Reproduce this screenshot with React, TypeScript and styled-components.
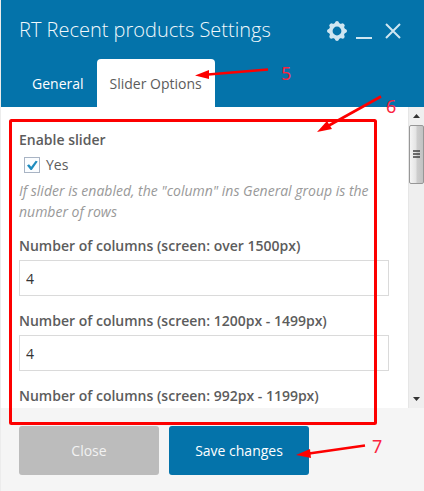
import React, { useId } from "react";
import styled, { createGlobalStyle } from "styled-components";

const blue = "#0473aa";
const red = "#fd0000";

const GlobalStyle = createGlobalStyle`
  * { box-sizing: border-box; }
  body {
    margin: 0;
    background: #ececec;
    font-family: "Open Sans", "Noto Sans", sans-serif;
    font-size: 14px;
    line-height: 20px;
    color: #5c5c5c;
  }
`;

const Panel = styled.main`
  position: relative;
  display: flex;
  flex-direction: column;
  height: 100vh;
  margin-left: 1px;
  background: #fff;
  overflow: hidden;
`;

const Header = styled.header`
  flex: none;
  background: ${blue};
  color: #fff;
`;

const TitleBar = styled.div`
  display: flex;
  align-items: center;
  justify-content: space-between;
  height: 59px;
  padding: 1px 21px 0 18px;
`;

const Title = styled.h1`
  margin: 0;
  font-size: 20px;
  line-height: 28px;
  font-weight: 300;
  color: #f2f9fc;
  white-space: nowrap;
`;

const WindowControls = styled.div`
  display: flex;
  gap: 8px;
  padding-top: 2px;
`;

const IconButton = styled.button`
  display: block;
  width: 20px;
  height: 20px;
  padding: 0;
  border: 0;
  background: none;
  color: #cfe6f1;

  svg { display: block; }
`;

const Tabs = styled.div`
  display: flex;
  padding-left: 18px;
`;

const Tab = styled.button<{ $active?: boolean }>`
  height: 48px;
  padding: 2px 13px 0;
  border: 0;
  border-radius: 4px 4px 0 0;
  background: ${(p) => (p.$active ? "#fff" : "transparent")};
  color: ${(p) => (p.$active ? "#5c5c5c" : "#fff")};
  font: ${(p) => (p.$active ? 400 : 500)} 14px/20px "Open Sans", sans-serif;
`;

const Body = styled.div`
  display: flex;
  flex: 1;
  min-height: 0;
`;

const Fields = styled.form`
  flex: 1;
  min-width: 0;
  padding: 23px 19px 0 18px;
  overflow: hidden;
`;

const Field = styled.div`
  margin-bottom: 15px;
`;

const Label = styled.label`
  display: block;
  margin-bottom: 4px;
  font-weight: 600;
`;

const Group = styled.fieldset`
  margin: 0 0 14px;
  padding: 0;
  border: 0;
`;

const Legend = styled.legend`
  padding: 0;
  font-weight: 600;
`;

const Option = styled.label`
  display: flex;
  align-items: center;
  gap: 6px;
  padding: 5px 0 5px 5px;
`;

const Tick = styled.span`
  position: relative;
  width: 16px;
  height: 16px;

  svg {
    position: absolute;
    inset: 0;
    pointer-events: none;
  }
`;

const Checkbox = styled.input`
  appearance: none;
  display: block;
  width: 16px;
  height: 16px;
  margin: 0;
  border: 1px solid #a9b4c4;
  background: #fbfdff;

  & + svg { display: none; }
  &:checked + svg { display: block; }
`;

const Hint = styled.p`
  margin: 0;
  line-height: 21px;
  font-style: italic;
  color: #999;
`;

const TextInput = styled.input`
  display: block;
  width: 100%;
  height: 36px;
  padding: 0 6px;
  border: 1px solid #dadada;
  background: #fff;
  color: #333;
  font: 400 14px/20px "Open Sans", sans-serif;
`;

const ScrollTrack = styled.div`
  display: flex;
  flex-direction: column;
  flex: none;
  width: 16px;
  background: #efefef;
  border-left: 1px solid #e6e6e6;
`;

const ScrollArrow = styled.button`
  display: grid;
  place-items: center;
  width: 100%;
  height: 18px;
  padding: 0;
  border: 0;
  background: none;
`;

const ScrollThumb = styled.div`
  display: grid;
  place-items: center;
  height: 59px;
  margin-bottom: auto;
  border: 1px solid #979797;
  border-radius: 2px;
  background: linear-gradient(90deg, #f5f5f5, #e4e4e4 45%, #cdcdcd 55%, #c2c2c2);
`;

const Footer = styled.footer`
  display: flex;
  flex: none;
  gap: 10px;
  padding: 18px 18px 16px;
  background: #f5f5f5;
`;

const ActionButton = styled.button<{ $primary?: boolean }>`
  width: 140px;
  height: 49px;
  padding: 0;
  border: 0;
  border-radius: 3px;
  background: ${(p) => (p.$primary ? blue : "#bcbcbc")};
  color: ${(p) => (p.$primary ? "#fff" : "#f2f2f2")};
  font: ${(p) => (p.$primary ? 500 : 400)} 14px/20px "Open Sans", sans-serif;
`;

const Annotations = styled.svg`
  position: absolute;
  top: 0;
  left: -1px;
  pointer-events: none;

  text {
    font: 400 18px "Noto Sans", sans-serif;
    fill: #fb2440;
  }
`;

const GearIcon = () => (
  <svg width="20" height="20" viewBox="0 0 20 20" aria-hidden="true">
    <g fill="currentColor">
      {[0, 45, 90, 135, 180, 225, 270, 315].map((a) => (
        <path key={a} d="M6.8 4.2 8.4 .7Q10 -.7 11.6 .7L13.2 4.2Z" transform={`rotate(${a} 10 10)`} />
      ))}
    </g>
    <circle cx="10" cy="10" r="6.2" fill="none" stroke="currentColor" strokeWidth="3.6" />
  </svg>
);

const MinimizeIcon = () => (
  <svg width="20" height="20" aria-hidden="true">
    <path d="M1 17H17" stroke="currentColor" strokeWidth="2" />
  </svg>
);

const CloseIcon = () => (
  <svg width="20" height="20" aria-hidden="true">
    <path d="M3 3 17 17M17 3 3 17" stroke="currentColor" strokeWidth="2" />
  </svg>
);

function NumberField({ label }: { label: string }) {
  const id = useId();
  return (
    <Field>
      <Label htmlFor={id}>{label}</Label>
      <TextInput id={id} type="text" defaultValue="4" />
    </Field>
  );
}

export default function App() {
  return (
    <>
      <GlobalStyle />
      <Panel>
        <Header>
          <TitleBar>
            <Title>RT Recent products Settings</Title>
            <WindowControls>
              <IconButton aria-label="Settings"><GearIcon /></IconButton>
              <IconButton aria-label="Minimize"><MinimizeIcon /></IconButton>
              <IconButton aria-label="Close window"><CloseIcon /></IconButton>
            </WindowControls>
          </TitleBar>
          <Tabs role="tablist">
            <Tab role="tab" aria-selected={false}>General</Tab>
            <Tab role="tab" aria-selected $active>Slider Options</Tab>
          </Tabs>
        </Header>

        <Body>
          <Fields>
            <Group>
              <Legend>Enable slider</Legend>
              <Option>
                <Tick>
                  <Checkbox type="checkbox" defaultChecked />
                  <svg width="16" height="16" aria-hidden="true">
                    <path d="M3 8.5 5 7.2 7.2 9.8 11.7 3.7 13.7 4.6 7.8 13H6.6Z" fill="#1e8cbe" />
                  </svg>
                </Tick>
                Yes
              </Option>
              <Hint>If slider is enabled, the "column" ins General group is the number of rows</Hint>
            </Group>
            <NumberField label="Number of columns (screen: over 1500px)" />
            <NumberField label="Number of columns (screen: 1200px - 1499px)" />
            <NumberField label="Number of columns (screen: 992px - 1199px)" />
          </Fields>
          <ScrollTrack>
            <ScrollArrow aria-label="Scroll up">
              <svg width="7" height="4" aria-hidden="true"><path d="M0 4 3.5 0 7 4Z" fill="#333" /></svg>
            </ScrollArrow>
            <ScrollThumb>
              <svg width="7" height="9" aria-hidden="true">
                <path d="M0 1H7M0 4H7M0 7H7" stroke="#444" strokeWidth="1.4" />
              </svg>
            </ScrollThumb>
            <ScrollArrow aria-label="Scroll down">
              <svg width="7" height="4" aria-hidden="true"><path d="M0 0 3.5 4 7 0Z" fill="#333" /></svg>
            </ScrollArrow>
          </ScrollTrack>
        </Body>

        <Footer>
          <ActionButton type="button">Close</ActionButton>
          <ActionButton type="button" $primary>Save changes</ActionButton>
        </Footer>

        <Annotations width="424" height="491">
          <rect x="10.5" y="120.5" width="365" height="303" rx="1" fill="none" stroke={red} strokeWidth="3" />
          <g stroke={red} strokeWidth="2.6">
            <path d="M268 69.5 208 74.5" />
            <path d="M381 96.5 328 126" />
            <path d="M365 445.5 309 453.5" />
          </g>
          <g fill={red}>
            <path d="M195 75.500 209 70V79Z" />
            <path d="M317 132 327 121 332 129Z" />
            <path d="M296 455 310 449 311 458Z" />
          </g>
          <text x="281" y="80">5</text>
          <text x="386" y="113">6</text>
          <text x="372" y="453">7</text>
        </Annotations>
      </Panel>
    </>
  );
}
